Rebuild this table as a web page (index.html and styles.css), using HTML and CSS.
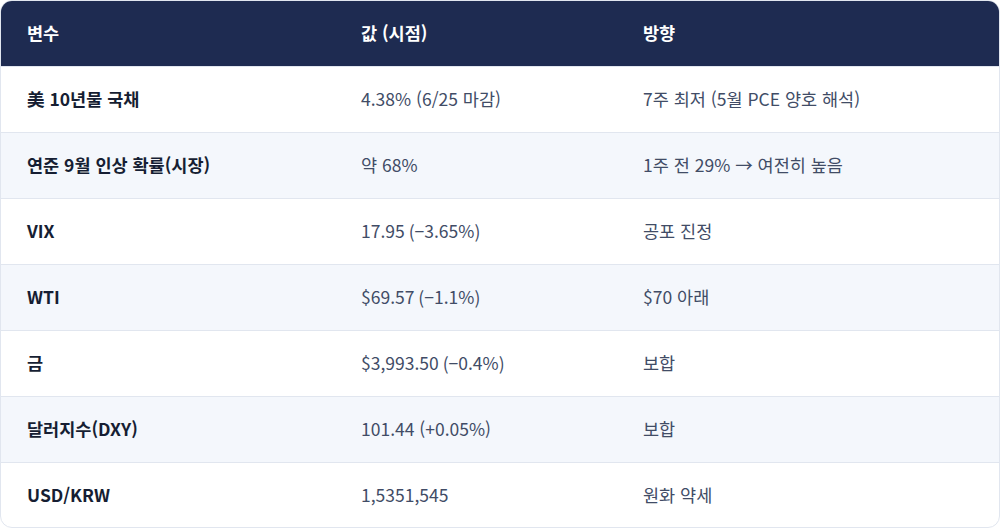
FILE: index.html
```html
<!DOCTYPE html>
<html lang="ko">
<head>
<meta charset="utf-8">
<link rel="stylesheet" href="styles.css">
</head>
<body>
<div class="wrap">
  <table class="tbl">
    <colgroup>
      <col class="c1"><col class="c2"><col class="c3">
    </colgroup>
    <thead>
      <tr><th>변수</th><th>값 (시점)</th><th>방향</th></tr>
    </thead>
    <tbody>
      <tr><td>美 10년물 국채</td><td>4.38% (6/25 마감)</td><td>7주 최저 (5월 PCE 양호 해석)</td></tr>
      <tr><td>연준 9월 인상 확률(시장)</td><td>약 68%</td><td>1주 전 29% → 여전히 높음</td></tr>
      <tr><td>VIX</td><td>17.95 (−3.65%)</td><td>공포 진정</td></tr>
      <tr><td>WTI</td><td>$69.57 (−1.1%)</td><td>$70 아래</td></tr>
      <tr><td>금</td><td>$3,993.50 (−0.4%)</td><td>보합</td></tr>
      <tr><td>달러지수(DXY)</td><td>101.44 (+0.05%)</td><td>보합</td></tr>
      <tr><td>USD/KRW</td><td>1,5351,545</td><td>원화 약세</td></tr>
    </tbody>
  </table>
</div>
</body>
</html>
```
FILE: styles.css
```css
html, body {
  margin: 0;
  padding: 0;
  background: #ffffff;
}
body {
  font-family: "Noto Sans CJK KR", "Noto Sans", sans-serif;
  font-size: 17.5px;
}
.wrap {
  width: 1000px;
  height: 528px;
  box-sizing: border-box;
  border: 1px solid #e1e6ef;
  border-radius: 12px;
  overflow: hidden;
}
.tbl {
  width: 100%;
  border-collapse: collapse;
  table-layout: fixed;
}
.c1 { width: 334px; }
.c2 { width: 282px; }
.tbl th, .tbl td {
  text-align: left;
  padding: 0 26px;
  height: 66px;
  box-sizing: border-box;
  vertical-align: middle;
  line-height: 24px;
  white-space: nowrap;
}
.tbl thead tr {
  background: #1e2b51;
}
.tbl th {
  color: #ffffff;
  font-weight: 700;
  height: 65px;
}
.tbl td {
  color: #414c66;
  font-weight: 400;
  border-top: 1px solid #e1e6ef;
}
.tbl td:first-child {
  color: #161e33;
  font-weight: 700;
}
.tbl tbody tr:nth-child(even) {
  background: #f4f7fc;
}
```
